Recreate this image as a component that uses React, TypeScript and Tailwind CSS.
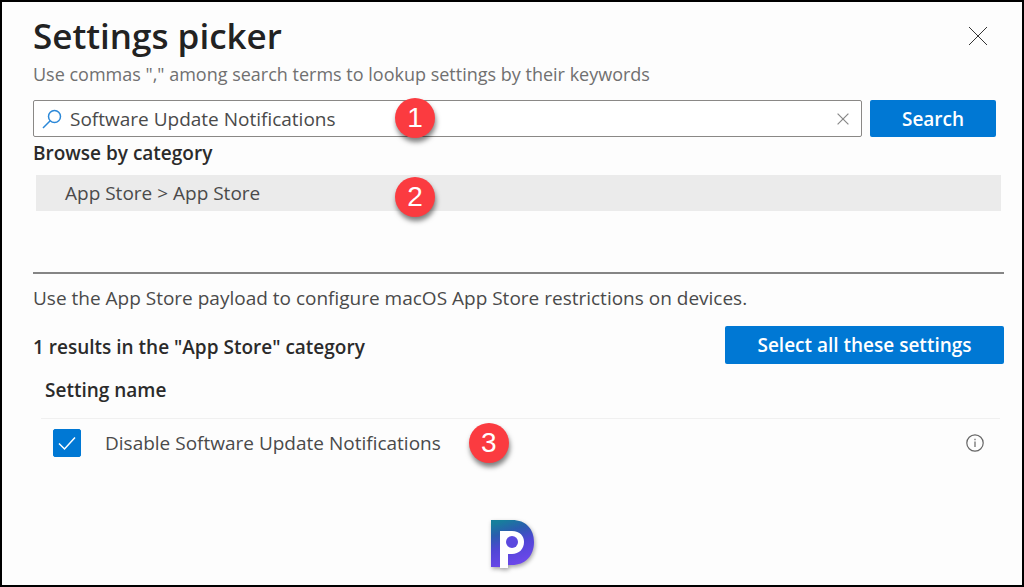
import { useState } from 'react';

interface StepBadgeProps {
  step: number;
  className?: string;
}

function StepBadge({ step, className = '' }: StepBadgeProps) {
  return (
    <span
      className={`flex h-10 w-10 items-center justify-center rounded-full bg-[#fb3b40] font-['Liberation_Sans',sans-serif] text-[28px] leading-8 text-white shadow-[1px_4px_5px_rgba(0,0,0,0.5)] ${className}`}
    >
      {step}
    </span>
  );
}

function CrossIcon({ className }: { className: string }) {
  return (
    <svg viewBox="0 0 20 20" fill="none" stroke="currentColor" className={className} aria-hidden="true">
      <path d="M1 1 19 19M19 1 1 19" />
    </svg>
  );
}

function SearchIcon() {
  return (
    <svg viewBox="0 0 20 20" fill="none" stroke="#2b88d8" strokeWidth="1.5" className="h-5 w-5 shrink-0" aria-hidden="true">
      <circle cx="12.5" cy="7.5" r="6" />
      <path d="M8.2 11.8 1 19" />
    </svg>
  );
}

function Logo() {
  return (
    <svg viewBox="0 0 48 52" className="h-13 w-12 drop-shadow-[1px_2px_2px_rgba(0,0,0,0.35)]" role="img" aria-label="Site logo">
      <defs>
        <linearGradient id="logo-fill" x1="0.3" y1="0" x2="0.6" y2="1">
          <stop offset="0" stopColor="#177f9c" />
          <stop offset="0.25" stopColor="#2a5dae" />
          <stop offset="0.55" stopColor="#5146d6" />
          <stop offset="1" stopColor="#7048ee" />
        </linearGradient>
      </defs>
      <path d="M2 1H23C37 1 45 10 45 23C45 37 36 46 23 46H19V48H2Z" fill="url(#logo-fill)" />
      <path d="M11 12H23C31 12 35 17 35 23C35 30 30 35 23 35H19V49H11Z" fill="#fff" />
      <circle cx="23" cy="23" r="6" fill="#5b49df" />
    </svg>
  );
}

export default function App() {
  const [query, setQuery] = useState('Software Update Notifications');
  const [disableUpdates, setDisableUpdates] = useState(true);

  return (
    <main className="min-h-screen border-2 border-black bg-[#fdfdfd] pt-3 pr-[18px] pl-[31px] font-['Open_Sans','Noto_Sans',sans-serif] text-[19px] leading-6 text-[#4a4a4a]">
      <header className="flex items-start justify-between pr-4">
        <div>
          <h1 className="text-[35px] leading-11 font-semibold text-[#222]">Settings picker</h1>
          <p className="mt-1 text-[18px] text-[#707070]">Use commas "," among search terms to lookup settings by their keywords</p>
        </div>
        <button type="button" aria-label="Close" className="mt-3 text-[#333]">
          <CrossIcon className="h-5 w-5" />
        </button>
      </header>

      <form className="relative mt-[14px] flex gap-2 pr-2" onSubmit={(e) => e.preventDefault()}>
        <div className="flex h-[37px] flex-1 items-center gap-2 rounded-xs border border-[#8a8886] bg-white pr-3 pl-2">
          <SearchIcon />
          <input
            type="text"
            aria-label="Search settings"
            value={query}
            onChange={(e) => setQuery(e.target.value)}
            className="min-w-0 flex-1 outline-none"
          />
          <button type="button" aria-label="Clear search" onClick={() => setQuery('')} className="text-[#888]">
            <CrossIcon className="h-3 w-3 stroke-2" />
          </button>
        </div>
        <button type="submit" className="h-[37px] w-[126px] rounded-xs bg-[#0078d4] font-semibold text-white">
          Search
        </button>
        <StepBadge step={1} className="absolute -top-0.5 left-[362px]" />
      </form>

      <section className="h-[137px] border-b-2 border-[#858585] pt-1">
        <h2 className="font-semibold text-[#2b2b2b]">Browse by category</h2>
        <div className="relative mt-[10px] mr-[3px] ml-[3px]">
          <button type="button" className="flex h-9 w-full items-center bg-[#ebebeb] px-[29px]">
            App Store &gt; App Store
          </button>
          <StepBadge step={2} className="absolute top-0.5 left-[359px]" />
        </div>
      </section>

      <p className="mt-3">Use the App Store payload to configure macOS App Store restrictions on devices.</p>

      <div className="mt-4 flex items-center justify-between">
        <h2 className="pt-1 font-semibold text-[#2b2b2b]">1 results in the "App Store" category</h2>
        <button type="button" className="h-[38px] w-[279px] rounded-xs bg-[#0078d4] font-semibold text-white">
          Select all these settings
        </button>
      </div>

      <div className="mt-[14px] pr-1 pl-2">
        <table className="w-full">
          <thead>
            <tr className="border-b border-[#f0f0f0]">
              <th className="pb-4 pl-1 text-left font-semibold text-[#2b2b2b]">Setting name</th>
              <th aria-label="Info" />
            </tr>
          </thead>
          <tbody>
            <tr>
              <td className="pl-3">
                <div className="flex h-12 items-center">
                  <span className="relative flex h-7 w-7">
                    <input
                      id="disable-updates"
                      type="checkbox"
                      checked={disableUpdates}
                      onChange={(e) => setDisableUpdates(e.target.checked)}
                      className="h-7 w-7 appearance-none rounded-xs border border-[#0078d4] checked:bg-[#0078d4]"
                    />
                    <svg viewBox="0 0 28 28" fill="none" stroke="#fff" strokeWidth="1.5" className="pointer-events-none absolute inset-0" aria-hidden="true">
                      <path d="M6 14.5 11.5 20 22 8.5" />
                    </svg>
                  </span>
                  <label htmlFor="disable-updates" className="pl-6">Disable Software Update Notifications</label>
                  <StepBadge step={3} className="ml-7" />
                </div>
              </td>
              <td className="pr-4">
                <button type="button" aria-label="About this setting" className="ml-auto block text-[#666]">
                  <svg viewBox="0 0 18 18" fill="none" stroke="currentColor" strokeWidth="1.2" className="h-[18px] w-[18px]" aria-hidden="true">
                    <circle cx="9" cy="9" r="8.2" />
                    <path d="M9 7.5V13M9 4.8V6.2" />
                  </svg>
                </button>
              </td>
            </tr>
          </tbody>
        </table>
      </div>

      <footer className="mt-13 flex justify-center pr-3">
        <Logo />
      </footer>
    </main>
  );
}
